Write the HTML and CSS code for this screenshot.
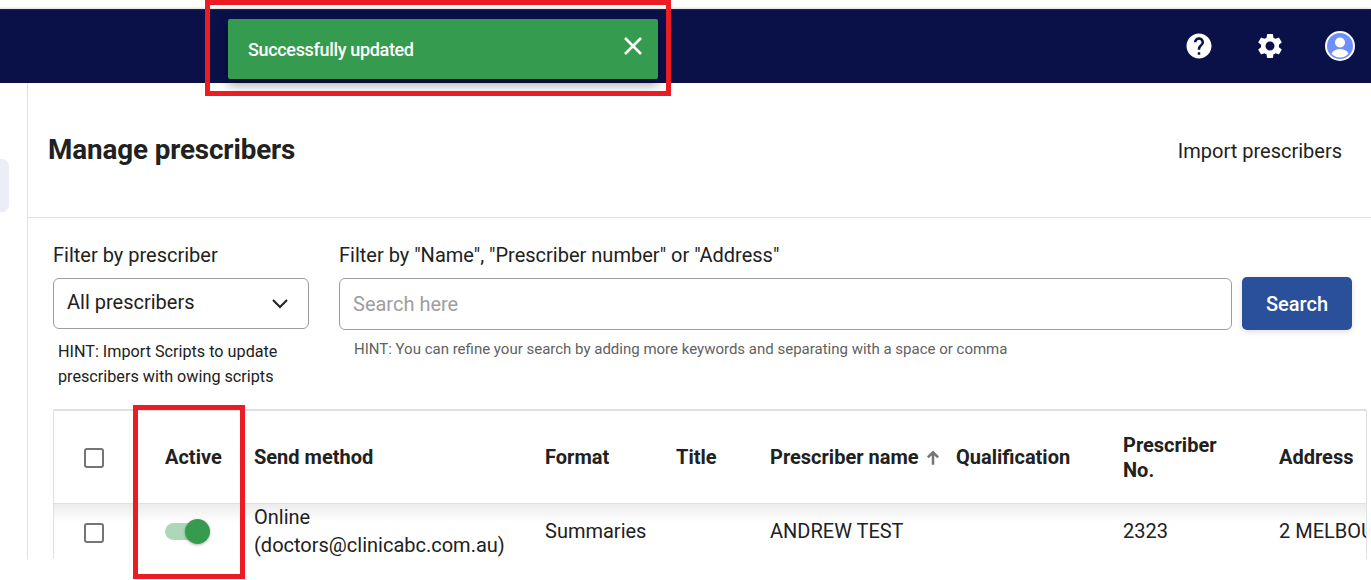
FILE: index.html
```html
<!DOCTYPE html>
<html lang="en">
<head>
<meta charset="utf-8">
<title>Manage prescribers</title>
<link rel="stylesheet" href="styles.css">
</head>
<body>
<div class="page">
  <header class="topbar">
    <button class="icon-btn" aria-label="Help">
      <svg width="30" height="30" viewBox="0 0 24 24"><path fill="#fff" d="M12 2C6.48 2 2 6.48 2 12s4.48 10 10 10 10-4.48 10-10S17.52 2 12 2zm1 17h-2v-2h2v2zm2.07-7.75l-.9.92C13.45 12.9 13 13.5 13 15h-2v-.5c0-1.1.45-2.1 1.17-2.83l1.24-1.26c.37-.36.59-.86.59-1.41 0-1.1-.9-2-2-2s-2 .9-2 2H8c0-2.21 1.79-4 4-4s4 1.79 4 4c0 .88-.36 1.68-.93 2.25z"/></svg>
    </button>
    <button class="icon-btn" aria-label="Settings">
      <svg width="30" height="30" viewBox="0 0 24 24"><path fill="#fff" d="M19.14 12.94c.04-.3.06-.61.06-.94 0-.32-.02-.64-.07-.94l2.03-1.58a.49.49 0 0 0 .12-.61l-1.92-3.32a.488.488 0 0 0-.59-.22l-2.39.96c-.5-.38-1.03-.7-1.62-.94l-.36-2.54a.484.484 0 0 0-.48-.41h-3.84c-.24 0-.43.17-.47.41l-.36 2.54c-.59.24-1.13.57-1.62.94l-2.39-.96c-.22-.08-.47 0-.59.22L2.74 8.87c-.12.21-.08.47.12.61l2.03 1.58c-.05.3-.09.63-.09.94s.02.64.07.94l-2.03 1.58a.49.49 0 0 0-.12.61l1.92 3.32c.12.22.37.29.59.22l2.39-.96c.5.38 1.03.7 1.62.94l.36 2.54c.05.24.24.41.48.41h3.84c.24 0 .44-.17.47-.41l.36-2.54c.59-.24 1.13-.56 1.62-.94l2.39.96c.22.08.47 0 .59-.22l1.92-3.32c.12-.22.07-.47-.12-.61l-2.01-1.58zM12 15.6c-1.98 0-3.6-1.62-3.6-3.6s1.62-3.6 3.6-3.6 3.6 1.62 3.6 3.6-1.62 3.6-3.6 3.6z"/></svg>
    </button>
    <button class="icon-btn" aria-label="Account">
      <svg width="30" height="30" viewBox="0 0 30 30"><circle cx="15" cy="15" r="14" fill="#6f8fff" stroke="#fff" stroke-width="2"/><circle cx="15" cy="11.5" r="5" fill="#fff"/><path fill="#fff" d="M6.5 22.5c1.5-3 5-4.500 8.500-4.500s7 1.500 8.500 4.500c-2 2.500-5 4-8.500 4s-6.500-1.500-8.500-4z"/></svg>
    </button>
  </header>

  <div class="shell">
    <aside class="sidebar"><div class="side-pill"></div></aside>
    <main class="main">
      <div class="title-row">
        <h1 class="title">Manage prescribers</h1>
        <a class="import-link">Import prescribers</a>
      </div>
      <section class="filters">
        <div class="filter-select">
          <label class="filter-label">Filter by prescriber</label>
          <div class="select">
            <span>All prescribers</span>
            <svg width="18" height="11" viewBox="0 0 18 11"><path d="M2 2l7 7 7-7" fill="none" stroke="#222" stroke-width="2"/></svg>
          </div>
          <p class="hint-left">HINT: Import Scripts to update prescribers with owing scripts</p>
        </div>
        <div class="filter-search">
          <label class="filter-label">Filter by "Name", "Prescriber number" or "Address"</label>
          <div class="search-row">
            <div class="search-input">Search here</div>
            <button class="search-btn">Search</button>
          </div>
          <p class="hint-right">HINT: You can refine your search by adding more keywords and separating with a space or comma</p>
        </div>
      </section>
      <div class="table-wrap">
        <table class="grid">
          <colgroup>
            <col class="c-check"><col class="c-active"><col class="c-send"><col class="c-format"><col class="c-title"><col class="c-name"><col class="c-qual"><col class="c-no"><col class="c-addr">
          </colgroup>
          <thead>
            <tr>
              <th class="cell-check"><span class="checkbox"></span></th>
              <th>Active</th>
              <th>Send method</th>
              <th>Format</th>
              <th>Title</th>
              <th>Prescriber name <svg class="sort" width="16" height="16" viewBox="0 0 14 14"><path d="M7 13V2M2.500 6.500L7 2l4.500 4.500" fill="none" stroke="#757575" stroke-width="2.200"/></svg></th>
              <th>Qualification</th>
              <th>Prescriber<br>No.</th>
              <th>Address</th>
            </tr>
          </thead>
          <tbody>
            <tr>
              <td class="cell-check"><span class="checkbox row-box"></span></td>
              <td><span class="switch"><span class="knob"></span></span></td>
              <td><span class="two-line">Online<br>(doctors@clinicabc.com.au)</span></td>
              <td>Summaries</td>
              <td></td>
              <td>ANDREW TEST</td>
              <td></td>
              <td>2323</td>
              <td class="nowrap">2 MELBOURNE ST</td>
            </tr>
          </tbody>
        </table>
      </div>
    </main>
  </div>

  <div class="toast">
    <span>Successfully updated</span>
    <svg width="20" height="20" viewBox="0 0 20 20"><path d="M2 2l16 16M18 2L2 18" fill="none" stroke="#fff" stroke-width="2.600"/></svg>
  </div>
  <div class="mark mark-toast"></div>
  <div class="mark mark-active"></div>
</div>
</body>
</html>
```

FILE: styles.css
```css
* { box-sizing: border-box; }
html, body { margin: 0; padding: 0; background: #fff; }
body { font-family: Roboto, "Liberation Sans", sans-serif; color: #212121; }

.page { position: relative; width: 1371px; height: 580px; overflow: hidden; padding-top: 9px; }

.topbar {
  height: 74px;
  background: #0a1149;
  border-top: 1px solid #1c2258;
  display: flex;
  align-items: center;
  justify-content: flex-end;
  gap: 40.5px;
  padding: 0 16px 2px 0;
  box-shadow: 0 -1px 2px rgba(0,0,0,.15);
}
.icon-btn { width: 30px; height: 30px; padding: 0; border: 0; background: none; display: block; }
.icon-btn svg { display: block; }

.shell { display: flex; height: 476px; }
.sidebar { width: 28px; border-right: 1px solid #e0e0e0; padding-top: 76px; flex: none; }
.side-pill { width: 9px; height: 53px; background: #eceef7; border-radius: 0 7px 7px 0; }

.main { flex: 1; min-width: 0; }

.title-row {
  height: 135px;
  border-bottom: 1px solid #e0e0e0;
  padding: 0 29px 0 20px;
  display: flex;
  align-items: center;
  justify-content: space-between;
}
.title { margin: 0 0 2px; font-size: 27.8px; font-weight: 700; letter-spacing: -.12px; color: #212121; }
.import-link { font-size: 20px; color: #212121; margin-top: 2px; }

.filters { display: flex; gap: 30px; padding: 25px 0 0 25px; height: 191px; }
.filter-select { width: 256px; flex: none; }
.filter-search { width: 1013px; flex: none; }
.filter-label { display: block; font-size: 20px; line-height: 24px; height: 36px; color: #212121; }

.select {
  height: 51px;
  margin-top: -1px;
  border: 1px solid #9e9e9e;
  border-radius: 6px;
  padding: 0 19px 4px 13px;
  display: flex;
  align-items: center;
  justify-content: space-between;
  font-size: 20px;
  color: #212121;
}
.select svg { margin-top: 4px; }
.hint-left { margin: 10px 0 0 5px; font-size: 16.2px; line-height: 25px; color: #212121; width: 240px; }

.search-row { display: flex; gap: 10px; margin-top: -2px; align-items: flex-start; }
.search-input {
  flex: none;
  width: 893px;
  height: 52px;
  margin-top: 1px;
  border: 1px solid #9e9e9e;
  border-radius: 6px;
  padding: 0 13px;
  display: flex;
  align-items: center;
  font-size: 20px;
  color: #9e9e9e;
}
.search-btn {
  width: 110px;
  height: 53px;
  border: 0;
  border-radius: 5px;
  background: #2a4f9b;
  color: #fff;
  font: 500 20px Roboto, "Liberation Sans", sans-serif;
  box-shadow: 0 2px 6px rgba(0,0,0,.12);
}
.hint-right { margin: 9px 0 0 15px; font-size: 15px; line-height: 20px; color: #616161; }

.table-wrap {
  margin-left: 25px;
  width: 1314px;
  height: 150px;
  border-top: 2px solid #e0e0e0;
  border-left: 1px solid #e0e0e0;
  border-right: 1px solid #e0e0e0;
  overflow: hidden;
}
.grid { table-layout: fixed; width: 1312px; border-collapse: collapse; font-size: 20px; color: #212121; }
.c-check { width: 111px; }
.c-active { width: 89px; }
.c-send { width: 291px; }
.c-format { width: 131px; }
.c-title { width: 94px; }
.c-name { width: 186px; }
.c-qual { width: 167px; }
.c-no { width: 156px; }
.c-addr { width: 87px; }

.grid th { height: 92px; text-align: left; font-weight: 700; padding: 2px 0 0; line-height: 25px; border-bottom: 1px solid #e0e0e0; white-space: nowrap; }
.grid td { height: 54px; padding: 0; line-height: 28px; vertical-align: middle; background: linear-gradient(#ececec 0, #fff 18px) no-repeat; }
.grid .cell-check { padding-left: 30px; }
.two-line { display: block; margin: -1px 0; }
.nowrap { white-space: nowrap; overflow: hidden; }
.sort { vertical-align: -2px; margin-left: 1px; }

.checkbox { display: block; width: 20px; height: 20px; border: 2px solid #757575; border-radius: 3px; background: #fff; }
.row-box { margin-top: 4px; }

.switch { position: relative; display: block; width: 40px; height: 17px; border-radius: 9px; background: #aed7b8; margin-top: 2px; }
.knob { position: absolute; right: -5px; top: -4px; width: 25px; height: 25px; border-radius: 50%; background: #359c4f; box-shadow: 0 1px 3px rgba(0,0,0,.3); }

.toast {
  position: absolute;
  left: 228px;
  top: 19px;
  width: 430px;
  height: 60px;
  background: #359c4f;
  border-radius: 2px;
  padding: 0 15px 0 20px;
  display: flex;
  align-items: center;
  justify-content: space-between;
  color: #fff;
  font-size: 18px;
  font-weight: 500;
  letter-spacing: -.34px;
  box-shadow: 0 6px 12px rgba(0,0,0,.35);
}
.toast svg { margin-bottom: 6px; }

.mark { position: absolute; border: 5px solid #ec1c24; pointer-events: none; }
.mark-toast { left: 205px; top: 0; width: 466px; height: 96px; }
.mark-active { left: 133px; top: 405px; width: 112px; height: 174px; }
```
